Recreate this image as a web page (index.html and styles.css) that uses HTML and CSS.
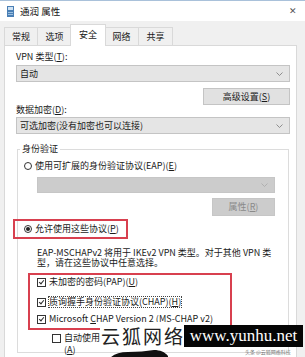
FILE: index.html
```html
<!DOCTYPE html>
<html lang="zh-CN">
  <head>
    <meta charset="UTF-8" />
    <meta name="viewport" content="width=device-width, initial-scale=1.0" />
    <title>通润 属性</title>
    <link rel="stylesheet" href="styles.css">
  </head>

  <body>
    <div class="window">
      <div class="titlebar">
        <svg class="app-icon" width="7" height="11" viewBox="0 0 7 11">
          <rect x="0" y="0" width="7" height="11" fill="#4a7fb5" />
          <rect x="1" y="1" width="5" height="3" fill="#cfe2f3" />
          <rect x="1" y="6" width="5" height="1" fill="#9cc0e0" />
          <rect x="1" y="8" width="5" height="1" fill="#9cc0e0" />
        </svg>
        <span class="title">通润 属性</span>
        <span class="close">✕</span>
      </div>

      <div class="tabs">
        <span class="tab first">常规</span>
        <span class="tab">选项</span>
        <span class="tab active">安全</span>
        <span class="tab">网络</span>
        <span class="tab">共享</span>
      </div>

      <div class="panel">
        <div class="label">VPN 类型(<u>T</u>):</div>
        <div class="select">
          <span>自动</span>
          <svg class="chevron" width="7" height="4" viewBox="0 0 7 4"><path d="M0.5 0.5 L3.5 3.5 L6.5 0.5" /></svg>
        </div>
        <div class="btn-row"><span class="btn wide">高级设置(<u>S</u>)</span></div>

        <div class="label">数据加密(<u>D</u>):</div>
        <div class="select second">
          <span>可选加密(没有加密也可以连接)</span>
          <svg class="chevron" width="7" height="4" viewBox="0 0 7 4"><path d="M0.5 0.5 L3.5 3.5 L6.5 0.5" /></svg>
        </div>

        <fieldset class="group">
          <legend>身份验证</legend>
          <div class="radio-row"><span class="radio"></span><span>使用可扩展的身份验证协议(EAP)(<u>E</u>)</span></div>
          <div class="select disabled">
            <svg class="chevron" width="7" height="4" viewBox="0 0 7 4"><path d="M0.5 0.5 L3.5 3.5 L6.5 0.5" /></svg>
          </div>
          <div class="btn-row inset"><span class="btn disabled">属性(<u>R</u>)</span></div>

          <div class="radio-row hl"><span class="radio on"></span><span>允许使用这些协议(<u>P</u>)</span></div>

          <div class="note">
            <span>EAP-MSCHAPv2 将用于 IKEv2 VPN 类型。对于其他 VPN 类</span>
            <span>型，请在这些协议中任意选择。</span>
          </div>

          <div class="checks">
            <div class="check-row r1"><span class="box on"></span><span>未加密的密码(PAP)(<u>U</u>)</span></div>
            <div class="check-row r2"><span class="box on"></span><span class="focus">质询握手身份验证协议(CHAP)(<u>H</u>)</span></div>
            <div class="check-row r3"><span class="box on"></span><span>Microsoft <u>C</u>HAP Version 2 (MS-CHAP v2)</span></div>
          </div>

          <div class="check-row auto">
            <span class="box"></span>
            <div class="auto-text">
              <span>自动使用我的 Windows 登录名称和密码(及域，如果有)</span>
              <span>(<u>A</u>)</span>
            </div>
          </div>
        </fieldset>
      </div>

      <!-- watermark over the screenshot -->
      <div class="wm-cn">云狐网络</div>
      <div class="wm-url">www.yunhu.net</div>
      <div class="wm-small">头条 @云狐网络科技</div>
      <svg class="wm-stroke" width="58" height="8" viewBox="0 0 58 8">
        <path d="M0 8 C4 4 10 2 18 2 C28 2 36 1 44 0 C50 0 55 2 58 6 L58 8 Z" fill="#111" />
      </svg>
    </div>
  </body>
</html>
```

FILE: styles.css
```css
body {
  margin: 0;
  font-family: "Noto Sans CJK SC", "Noto Sans", sans-serif;
  font-size: 9px;
  line-height: 10px;
  color: #1a1a1a;
}

u {
  text-decoration: underline;
  text-underline-offset: 1px;
}

.window {
  position: relative;
  width: 305px;
  height: 357px;
  overflow: hidden;
  background-color: #f0f0f0;
}

/* title bar */
.titlebar {
  height: 20px;
  background-color: #fff;
  border-top: 1px solid #a9c1da;
  display: flex;
  align-items: center;
  padding: 0 8px 0 7px;
}
.app-icon {
  margin-right: 6px;
}
.title {
  font-size: 9.5px;
  color: #111;
}
.close {
  margin-left: auto;
  font-size: 9px;
  color: #555;
}

/* tabs */
.tabs {
  display: flex;
  align-items: flex-end;
  height: 18px;
  margin-top: 6px;
  padding-left: 4px;
}
.tab {
  box-sizing: border-box;
  width: 34px;
  height: 18px;
  line-height: 17px;
  text-align: center;
  border: 1px solid #d9d9d9;
  border-left: none;
  border-bottom: none;
  background-color: #f0f0f0;
}
.tab.first {
  border-left: 1px solid #d9d9d9;
}
.tab.active {
  position: relative;
  z-index: 1;
  width: 36px;
  height: 22px;
  line-height: 19px;
  margin: 0 -1px -1px -2px;
  border-left: 1px solid #d9d9d9;
  background-color: #fff;
}

/* main page */
.panel {
  box-sizing: border-box;
  width: 293px;
  height: 320px;
  margin-left: 4px;
  padding: 6px 6px 0 11px;
  background-color: #fff;
  border: 1px solid #d9d9d9;
}

.label {
  height: 10px;
}

.select {
  box-sizing: border-box;
  height: 17px;
  margin-top: 3px;
  padding: 0 6px 0 3px;
  display: flex;
  align-items: center;
  justify-content: space-between;
  background-color: #e5e5e5;
  border: 1px solid #c4c4c4;
}
.select.second {
  margin-top: 2px;
}
.chevron {
  fill: none;
  stroke: #777;
  stroke-width: 0.8;
}
.select.disabled {
  height: 16px;
  margin: 6px 7px 0 13px;
  justify-content: flex-end;
  background-color: #cccccc;
  border-color: #c6c6c6;
}
.select.disabled .chevron {
  stroke: #a8a8a8;
}

.btn-row {
  display: flex;
  justify-content: flex-end;
  margin-top: 6px;
}
.btn-row.inset {
  margin-top: 5px;
  padding-right: 7px;
}
.btn {
  box-sizing: border-box;
  height: 17px;
  line-height: 15px;
  text-align: center;
  background-color: #e1e1e1;
  border: 1px solid #c4c4c4;
}
.btn.wide {
  width: 87px;
}
.btn.disabled {
  width: 63px;
  height: 18px;
  line-height: 16px;
  color: #8a8a8a;
  background-color: #cccccc;
  border-color: #c6c6c6;
}

/* group box */
.group {
  margin: 10px 1px 0 1px;
  padding: 7px 6px 0 6px;
  min-width: 0;
  height: 200px;
  border: 1px solid #dcdcdc;
}
.group legend {
  padding: 0 2px;
  margin-left: -4px;
  line-height: 10px;
}

.radio-row {
  display: flex;
  align-items: center;
  gap: 3px;
  height: 10px;
  white-space: nowrap;
}
.radio {
  box-sizing: border-box;
  flex: none;
  width: 8px;
  height: 8px;
  border: 1px solid #333;
  border-radius: 50%;
  background-color: #fff;
  display: flex;
  align-items: center;
  justify-content: center;
}
.radio.on::after {
  content: "";
  width: 4px;
  height: 4px;
  border-radius: 50%;
  background-color: #222;
}

.radio-row.hl {
  box-sizing: border-box;
  width: 115px;
  height: 20px;
  margin: 3px 0 0 -11px;
  padding-left: 9px;
  border: 2px solid #d8404f;
}

.note {
  margin: 9px 0 0 13px;
  line-height: 9.5px;
}
.note span {
  display: block;
  white-space: nowrap;
}

.checks {
  box-sizing: border-box;
  width: 204px;
  margin: 6px 0 0 4px;
  padding: 2px 0 4px 7px;
  border: 2px solid #d8404f;
}
.check-row {
  display: flex;
  align-items: center;
  gap: 3px;
  height: 10px;
  white-space: nowrap;
}
.check-row.r2 {
  margin-top: 10px;
}
.check-row.r3 {
  margin-top: 7px;
}
.box {
  box-sizing: border-box;
  flex: none;
  width: 9px;
  height: 9px;
  border: 1px solid #333;
  background-color: #fff;
  position: relative;
}
.box.on::after {
  content: "";
  position: absolute;
  left: 2px;
  top: 0px;
  width: 2px;
  height: 4px;
  border-right: 1px solid #2b2b2b;
  border-bottom: 1px solid #2b2b2b;
  transform: rotate(40deg);
}
.focus {
  outline: 1px dotted #444;
}

.check-row.auto {
  align-items: flex-start;
  height: auto;
  margin: 3px 0 0 28px;
}
.check-row.auto .box {
  margin-top: 1px;
}
.auto-text {
  width: 37px;
  overflow: hidden;
  line-height: 12px;
  margin-top: -1px;
}
.auto-text span {
  display: block;
}

/* watermark */
.wm-cn {
  position: absolute;
  left: 100px;
  top: 322px;
  width: 83px;
  height: 28px;
  padding-left: 1px;
  background-color: #fff;
  font-size: 19px;
  line-height: 28px;
  letter-spacing: 2px;
  color: #222;
  white-space: nowrap;
}
.wm-url {
  position: absolute;
  left: 184px;
  top: 325px;
  width: 119px;
  height: 22px;
  background-color: #050505;
  color: #fff;
  font-family: "Liberation Serif", "DejaVu Serif", serif;
  font-size: 17px;
  line-height: 22px;
  text-align: center;
}
.wm-small {
  position: absolute;
  left: 245px;
  top: 349px;
  font-size: 5px;
  line-height: 6px;
  color: #777;
  white-space: nowrap;
}
.wm-stroke {
  position: absolute;
  left: 110px;
  top: 350px;
}
```
